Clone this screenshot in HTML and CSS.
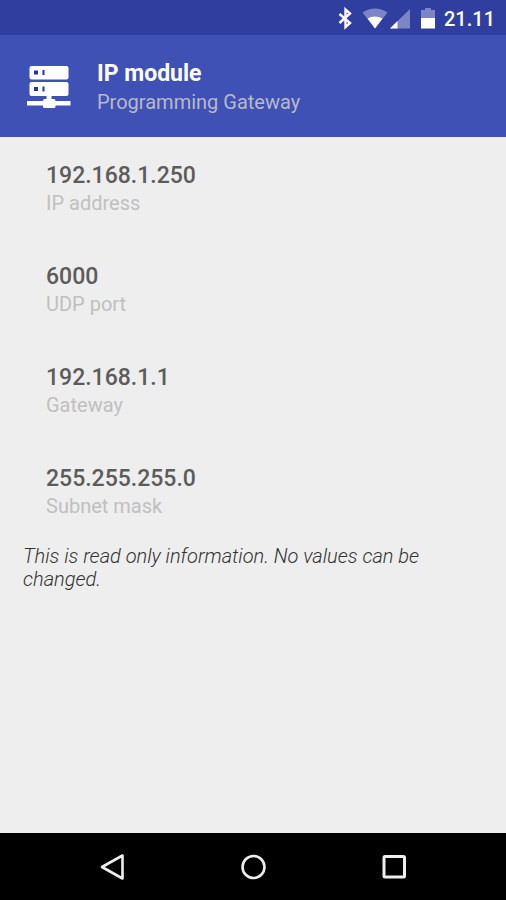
FILE: index.html
```html
<!DOCTYPE html>
<html lang="en">
<head>
<meta charset="utf-8">
<meta name="viewport" content="width=device-width, initial-scale=1">
<title>IP module</title>
<link rel="stylesheet" href="styles.css">
</head>
<body>
<div class="status-bar">
  <svg class="status-icons" width="100" height="24" viewBox="0 1 100 24" aria-hidden="true">
    <path d="M1.500 8 12 17 7.500 21V3.500l4.500 4L1.500 17" fill="none" stroke="#fff" stroke-width="2.400"/>
    <path d="M24.500 6.500Q37 -1.500 49.500 6.500L37 22.500Z" fill="#7c86c6"/>
    <path d="M29.500 12.500Q37 8.500 44.500 12.500L37 22.500Z" fill="#fff"/>
    <path d="M72 3V22.500H52Z" fill="#7c86c6"/>
    <path d="M59.500 15V22.500H52Z" fill="#fff"/>
    <path d="M83 12V4h4V2h6v2h4v8Z" fill="#7c86c6"/>
    <path d="M83 12h14v10.500h-14Z" fill="#fff"/>
  </svg>
  <time class="clock">21.11</time>
</div>
<header class="app-bar">
  <svg class="server-icon" width="44" height="44" viewBox="0 1 44 44" aria-hidden="true">
    <rect x="2.500" y="1" width="39" height="13.500" rx="2" fill="#fff"/>
    <rect x="2.500" y="17" width="39" height="14" rx="2" fill="#fff"/>
    <path d="M19.500 30h5v4h2.500q1.500 0 1.500 2H43.500v4.500H28.500v1q0 1.500-1.500 1.500H17.500q-1.500 0-1.500-1.500v-1H0V36h16q0-2 1.500-2h2Z" fill="#fff"/>
    <path d="M7 5.500h4v4H7zM15.500 5h2v5h-2zM7 22h4v4H7zM15.500 21.500h2v5h-2z" fill="#2634a5"/>
  </svg>
  <div class="heading">
    <h1 class="title">IP module</h1>
    <p class="subtitle">Programming Gateway</p>
  </div>
</header>
<main class="content">
  <dl class="settings">
    <div class="setting"><dt class="label">IP address</dt><dd class="value">192.168.1.250</dd></div>
    <div class="setting"><dt class="label">UDP port</dt><dd class="value">6000</dd></div>
    <div class="setting"><dt class="label">Gateway</dt><dd class="value">192.168.1.1</dd></div>
    <div class="setting"><dt class="label">Subnet mask</dt><dd class="value">255.255.255.0</dd></div>
  </dl>
  <p class="note">This is read only information. No values can be changed.</p>
</main>
<nav class="nav-bar" aria-label="System">
  <button class="nav-button" type="button" aria-label="Back">
    <svg width="28" height="28" viewBox="0 0 28 28"><path d="M25.500 2.500v23L5 14Z" fill="none" stroke="#eee" stroke-width="2.600" stroke-linejoin="round"/></svg>
  </button>
  <button class="nav-button" type="button" aria-label="Home">
    <svg width="28" height="28" viewBox="0 0 28 28"><circle cx="14.500" cy="14" r="11" fill="none" stroke="#eee" stroke-width="2.600"/></svg>
  </button>
  <button class="nav-button" type="button" aria-label="Recent apps">
    <svg width="28" height="28" viewBox="0 0 28 28"><rect x="3" y="3.500" width="20.500" height="20.500" rx="1" fill="none" stroke="#eee" stroke-width="3"/></svg>
  </button>
</nav>
</body>
</html>
```
FILE: styles.css
```css
* {
  box-sizing: border-box;
}

body {
  margin: 0;
  min-height: 100vh;
  display: flex;
  flex-direction: column;
  background: #eee;
  color: #5c5c5c;
  font-family: Roboto, sans-serif;
  font-size: 20px;
}

h1, p, dl, dd {
  margin: 0;
}

.status-bar {
  display: flex;
  justify-content: flex-end;
  align-items: center;
  gap: 6px;
  padding: 7px 11px 4px;
  background: #303f9f;
  color: #fff;
}

.clock {
  font-weight: 500;
  line-height: 24px;
}

.app-bar {
  display: flex;
  align-items: center;
  gap: 26px;
  padding: 25px 27px 21px;
  background: #3f51b5;
}

.title {
  color: #fff;
  font-size: 23px;
  font-weight: 700;
  line-height: 28px;
}

.subtitle {
  color: #b8b9c8;
  line-height: 28px;
}

.content {
  flex: 1;
  padding: 25px 23px;
}

.settings {
  display: grid;
  gap: 46px;
  padding: 0 23px;
}

.setting {
  display: flex;
  flex-direction: column-reverse;
}

.value {
  font-size: 23px;
  font-weight: 500;
  line-height: 28px;
}

.label {
  color: #c0c0c0;
  line-height: 27px;
}

.note {
  margin-top: 25px;
  color: #333;
  font-style: italic;
  font-weight: 300;
  line-height: 23px;
}

.nav-bar {
  display: flex;
  justify-content: center;
  background: #000;
}

.nav-button {
  width: 28%;
  height: 67px;
  padding: 0;
  border: 0;
  background: none;
}

.nav-button svg {
  display: block;
  margin: 0 auto;
}
```
